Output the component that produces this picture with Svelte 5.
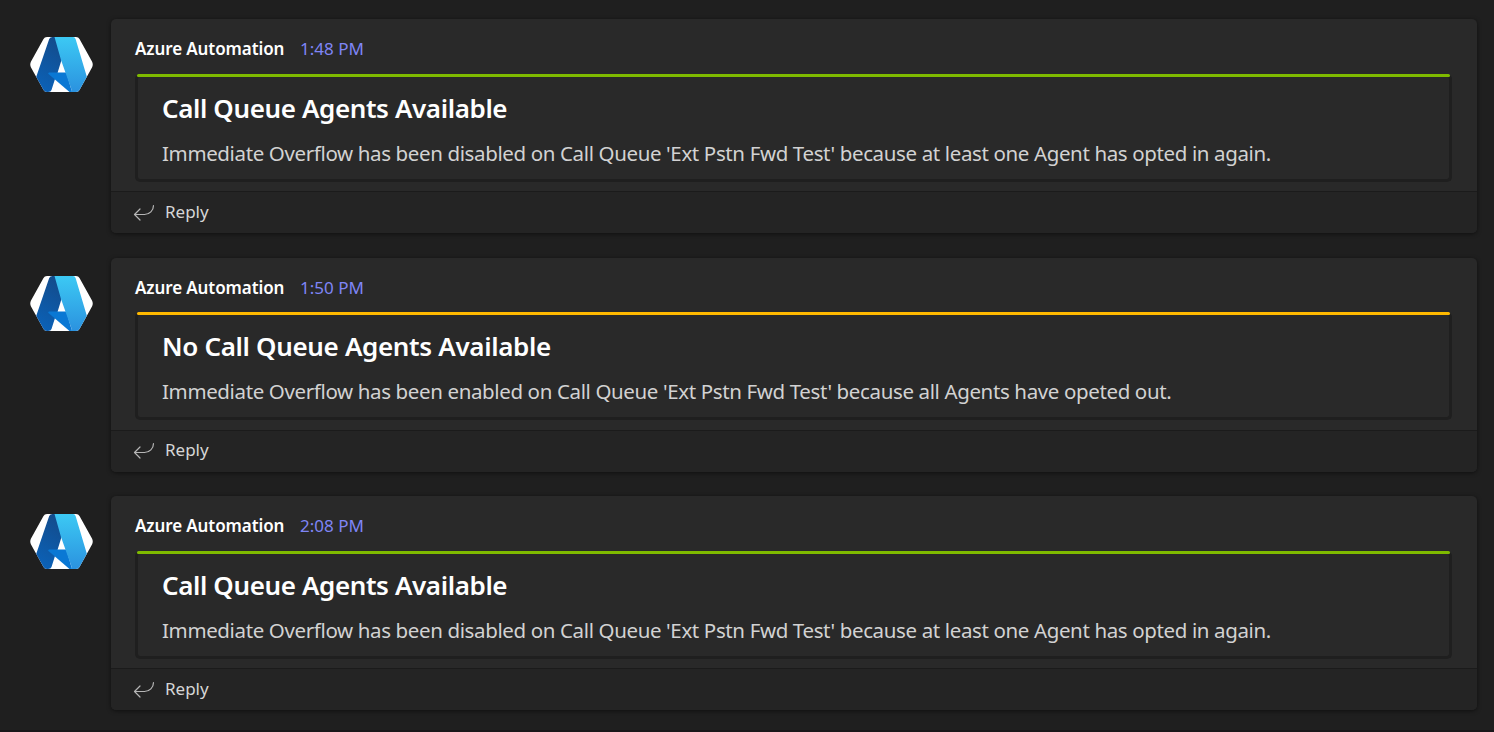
<script>
  const messages = [
    { time: '1:48 PM', tone: 'good', title: 'Call Queue Agents Available', text: "Immediate Overflow has been disabled on Call Queue 'Ext Pstn Fwd Test' because at least one Agent has opted in again." },
    { time: '1:50 PM', tone: 'warn', title: 'No Call Queue Agents Available', text: "Immediate Overflow has been enabled on Call Queue 'Ext Pstn Fwd Test' because all Agents have opeted out." },
    { time: '2:08 PM', tone: 'good', title: 'Call Queue Agents Available', text: "Immediate Overflow has been disabled on Call Queue 'Ext Pstn Fwd Test' because at least one Agent has opted in again." }
  ];
</script>

<main>
  {#each messages as m, i}
    <article class="message">
      <svg class="avatar" viewBox="0 0 63 55" width="63" height="55">
        <defs>
          <clipPath id="hex{i}"><path d="M17 0H46Q48.500 0 49.500 2L62 24.500Q63.500 27.500 62 30.500L49.500 53Q48.500 55 46 55H17Q14.500 55 13.500 53L1 30.500Q-.5 27.500 1 24.500L13.500 2Q14.500 0 17 0Z" /></clipPath>
          <linearGradient id="dark{i}" x1="0.600" y1="0" x2="0.300" y2="1"><stop offset="0" stop-color="#134c8c" /><stop offset="1" stop-color="#0b62b8" /></linearGradient>
          <linearGradient id="light{i}" x1="0" y1="0" x2="0" y2="1"><stop offset="0" stop-color="#3cc9f4" /><stop offset="1" stop-color="#2b92df" /></linearGradient>
        </defs>
        <g clip-path="url(#hex{i})">
          <rect width="63" height="55" fill="#fff" />
          <path d="M22.500 0H27L32 20L31.500 23L27.500 36L28 38L25 42L21.500 53Q21 55 18 55H12L5.500 42L19.200 2Q20 0 22.500 0Z" fill="url(#dark{i})" />
          <path d="M19 35.500H36.500L42 55H39.500L18.500 37Q17.500 36 19 35.500Z" fill="#0a78d4" />
          <path d="M24.500 0H43Q45 0 45.600 2L59 47L54 55H40Q42 54.500 41.300 52L31 23Z" fill="url(#light{i})" />
        </g>
      </svg>
      <section class="card">
        <div class="content">
          <header><b>Azure Automation</b><time>{m.time}</time></header>
          <div class="notice {m.tone}">
            <h2>{m.title}</h2>
            <p>{m.text}</p>
          </div>
        </div>
        <footer>
          <svg width="22" height="18" viewBox="0 0 22 18" fill="none" stroke="#b5b5b5" stroke-width="1.200" stroke-linecap="round" stroke-linejoin="round"><path d="M20.500 1.500C20.500 6.500 16.500 10.500 11.500 10.500H1.500M7 5L1.500 10.500L7 16" /></svg>
          <span>Reply</span>
        </footer>
      </section>
    </article>
  {/each}
</main>

<style>
  :global(body) { margin: 0; background: #1f1f1f; overflow: hidden; }
  main { box-sizing: border-box; height: 732px; padding: 19px 17px 0 30px; display: flex; flex-direction: column; gap: 24.500px; font-family: "Noto Sans", sans-serif; border-bottom: 2px solid #191619; }
  .message { display: flex; height: 214px; flex: none; }
  .avatar { flex: none; margin: 18px 18px 0 0; }
  .card { flex: 1; display: flex; flex-direction: column; border-radius: 5px; overflow: hidden; background: #292929; box-shadow: 0 1px 4px #0008; }
  .content { box-sizing: border-box; height: 172px; padding: 0 25px 0 24px; }
  header { display: flex; align-items: center; height: 54.900px; padding-top: 4.200px; box-sizing: border-box; white-space: nowrap; }
  b { width: 165px; color: #fff; font-size: 17px; font-weight: 600; letter-spacing: -.1px; }
  time { color: #7f85f5; font-size: 17px; }
  .notice { box-sizing: border-box; position: relative; height: 108px; border: 3px solid #1f1f1f; border-top-color: transparent; border-radius: 5px; padding: 0 24px; white-space: nowrap; }
  .notice::before { content: ""; position: absolute; left: -1px; right: -1px; top: -3px; height: 3px; border-radius: 2px; background: #7fba00; }
  .notice.warn::before { background: #ffb900; }
  h2 { margin: 0; padding-top: 11px; line-height: 40px; font-size: 26px; font-weight: 600; letter-spacing: -.38px; color: #fff; }
  .warn h2 { letter-spacing: -.33px; }
  p { margin: 5px 0 0; line-height: 40px; font-size: 20.500px; letter-spacing: -.37px; color: #d2d2d2; }
  footer { box-sizing: border-box; height: 42px; display: flex; align-items: center; gap: 10px; padding-left: 22px; border-top: 1px solid #1b1b1b; background: #242424; color: #d6d6d6; font-size: 17px; }
  footer span { margin-top: -2.600px; }
</style>
